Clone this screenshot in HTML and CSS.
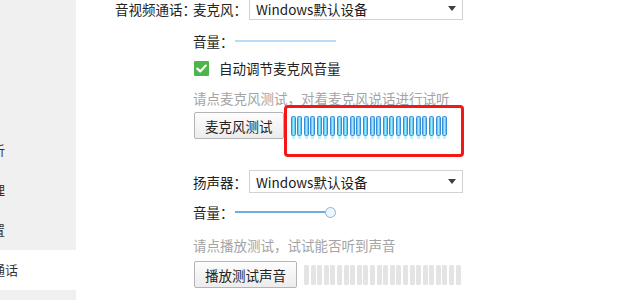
FILE: index.html
```html
<!DOCTYPE html>
<html lang="zh-CN">
<head>
<meta charset="utf-8">
<title>音视频通话设置</title>
<link rel="stylesheet" href="styles.css">
</head>
<body>
<div class="app">
  <aside class="sidebar">
    <div class="nav-item"></div>
    <div class="nav-item"></div>
    <div class="nav-item"></div>
    <div class="nav-item"><span>数据分析</span></div>
    <div class="nav-item"><span>文件管理</span></div>
    <div class="nav-item"><span>安全设置</span></div>
    <div class="nav-item active"><span>音视频通话</span></div>
    <div class="nav-item"></div>
  </aside>
  <main class="content">
    <div class="section-label">音视频通话：</div>
    <div class="section-body">
      <div class="row field">
        <span class="label">麦克风：</span>
        <div class="select"><span>Windows默认设备</span><i class="caret"></i></div>
      </div>
      <div class="row volume">
        <span class="label">音量：</span>
        <div class="slider disabled"><div class="track"></div></div>
      </div>
      <div class="row check-row">
        <span class="checkbox"><svg width="15" height="15" viewBox="0 0 15 15"><path d="M3.3 7.6 L6.2 10.4 L11.8 4.6" fill="none" stroke="#fff" stroke-width="2.2" stroke-linecap="round" stroke-linejoin="round"/></svg></span>
        <span class="check-label">自动调节麦克风音量</span>
      </div>
      <div class="row hint">请点麦克风测试，对着麦克风说话进行试听</div>
      <div class="row test-row">
        <button class="btn">麦克风测试</button>
        <div class="meter active">
          <i></i><i></i><i></i><i></i><i></i><i></i><i></i><i></i><i></i><i></i><i></i><i></i>
          <i></i><i></i><i></i><i></i><i></i><i></i><i></i><i></i><i></i><i></i><i></i><i></i>
        </div>
      </div>

      <div class="row field speaker">
        <span class="label">扬声器：</span>
        <div class="select"><span>Windows默认设备</span><i class="caret"></i></div>
      </div>
      <div class="row volume speaker-vol">
        <span class="label">音量：</span>
        <div class="slider"><div class="track"></div><div class="thumb"></div></div>
      </div>
      <div class="row hint hint2">请点播放测试，试试能否听到声音</div>
      <div class="row test-row test2">
        <button class="btn">播放测试声音</button>
        <div class="meter">
          <i></i><i></i><i></i><i></i><i></i><i></i><i></i><i></i><i></i><i></i><i></i><i></i>
          <i></i><i></i><i></i><i></i><i></i><i></i><i></i><i></i><i></i><i></i><i></i><i></i>
        </div>
      </div>
    </div>
  </main>
</div>
<div class="annotation"></div>
</body>
</html>
```
FILE: styles.css
```css
html, body {
  margin: 0;
  padding: 0;
  background: #fff;
}
body {
  width: 620px;
  height: 300px;
  overflow: hidden;
  position: relative;
  font-family: "Noto Sans CJK SC", "Noto Sans", sans-serif;
  font-size: 13.5px;
  color: #222;
}
.app {
  display: flex;
  height: 300px;
}
.sidebar {
  width: 76px;
  flex: none;
  background: #f0f0f0;
  padding-top: 10px;
  overflow: hidden;
}
.nav-item {
  height: 40px;
  line-height: 40px;
  white-space: nowrap;
  color: #333;
  font-size: 13px;
}
.nav-item span {
  margin-left: -47px;
}
.nav-item.active {
  background: #fff;
}
.content {
  display: flex;
  padding-left: 39px;
  margin-top: -3px;
}
.section-label {
  width: 78px;
  height: 23px;
  line-height: 24px;
  white-space: nowrap;
}
.section-body {
  display: flex;
  flex-direction: column;
}
.row {
  display: flex;
  align-items: center;
  white-space: nowrap;
}
.field {
  height: 23px;
}
.label {
  line-height: 20px;
  width: 54px;
}
.select {
  margin-left: 2px;
  width: 206px;
  height: 21px;
  border: 1px solid #d2d2d2;
  background: #fff;
  display: flex;
  align-items: center;
  padding-left: 6px;
  box-sizing: content-box;
  color: #1a1a1a;
}
.select span {
  flex: 1;
}
.caret {
  width: 0;
  height: 0;
  border-left: 4.5px solid transparent;
  border-right: 4.5px solid transparent;
  border-top: 5px solid #404040;
  margin-right: 6px;
}
.volume {
  height: 20px;
  margin-top: 11px;
}
.volume .label {
  width: 42px;
}
.slider {
  display: flex;
  align-items: center;
}
.slider .track {
  width: 101px;
  height: 2px;
  background: #b9dcf4;
}
.slider:not(.disabled) .track {
  width: 91px;
  background: #6aaee4;
}
.thumb {
  width: 9px;
  height: 9px;
  border: 1px solid #86b6e0;
  border-radius: 50%;
  background: #eef5fc;
  margin-left: -1px;
}
.check-row {
  height: 20px;
  margin-top: 7px;
}
.checkbox {
  width: 15px;
  height: 15px;
  margin-left: 1px;
  background: #4eb54a;
  border-radius: 1px;
  display: flex;
}
.check-label {
  margin-left: 10px;
}
.hint {
  height: 20px;
  margin-top: 10px;
  color: #a4a4a4;
}
.test-row {
  margin-top: 4px;
}
.btn {
  height: 27px;
  padding: 0 10px;
  font-family: inherit;
  font-size: 13.5px;
  color: #222;
  border: 1px solid #b4b4b4;
  border-radius: 2px;
  background: linear-gradient(#fdfdfd, #ececec);
  margin-left: 1px;
}
.meter {
  margin-left: 7px;
  display: flex;
  gap: 1.6px;
  width: 157px;
}
.meter i {
  width: 5px;
  height: 20px;
  border-radius: 1.5px;
  background: #e4e4e4;
  box-sizing: border-box;
}
.meter.active i {
  border: 1px solid #3a8dd8;
  background: linear-gradient(to right, #4bbdec, #a6e9fb 50%, #4bbdec);
  box-shadow: 0 4px 0 -1px #c4f0fb;
}
.speaker {
  margin-top: 31px;
}
.speaker-vol {
  margin-top: 9px;
}
.hint2 {
  margin-top: 13px;
}
.test2 {
  margin-top: 6px;
}
.annotation {
  position: absolute;
  left: 284px;
  top: 105px;
  width: 174px;
  height: 46px;
  border: 3px solid #f51616;
  border-radius: 4px;
}
```
